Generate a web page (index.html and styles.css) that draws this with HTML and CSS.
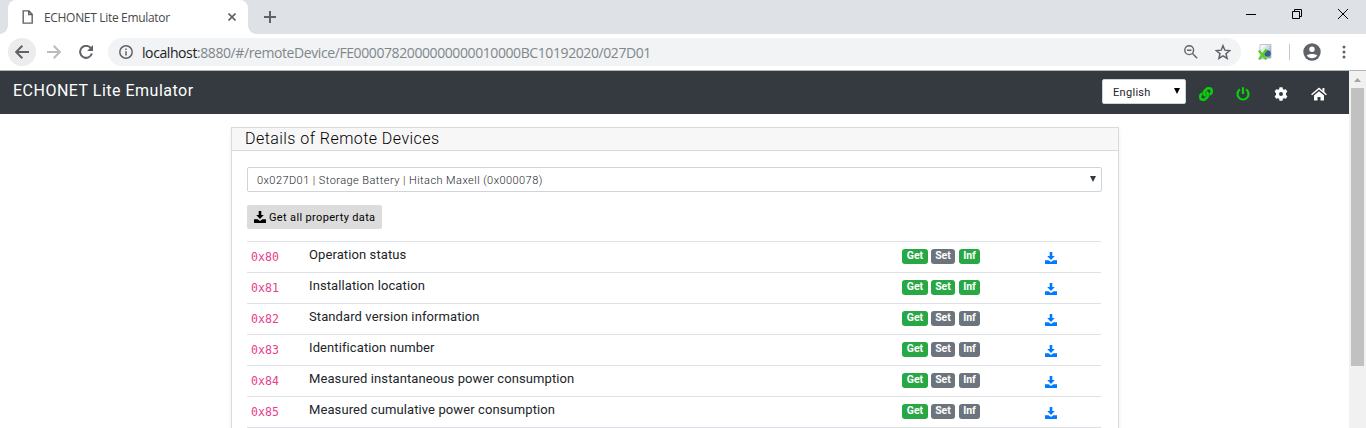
FILE: index.html
```html
<!DOCTYPE html>
<html lang="en">
<head>
<meta charset="utf-8">
<title>ECHONET Lite Emulator</title>
<link rel="stylesheet" href="styles.css">
</head>
<body>
<svg class="defs" aria-hidden="true">
  <symbol id="download" viewBox="0 0 12 12"><path d="M4.700 0h2.600v4h2.500L6 8 2.200 4h2.500zM0 8.200h3.600L6 10.100 8.400 8.200H12v3.300q0 .5-.5.5H.5Q0 12 0 11.500z"/></symbol>
</svg>
<header class="tabstrip">
  <div class="tab">
    <svg class="page-icon" viewBox="0 0 12 14"><path d="M1.2.9H7l3.2 3.3v8.900h-9zM6.700 1v3.500h3.500" /></svg>
    <span class="tab-title">ECHONET Lite Emulator</span>
    <svg class="tab-close" viewBox="0 0 8 8"><path d="M.5.5l7 7M7.500.5l-7 7"/></svg>
  </div>
  <svg class="new-tab" viewBox="0 0 12 12"><path d="M6 0v12M0 6h12"/></svg>
  <div class="window-buttons">
    <svg viewBox="0 0 10 10"><path d="M0 5.500h10"/></svg>
    <svg viewBox="0 0 10 10"><path d="M.5 2.500h7v7h-7zM2.500 2.500v-2h7v7h-2"/></svg>
    <svg viewBox="0 0 10 10"><path d="M0 0l10 10M10 0L0 10"/></svg>
  </div>
</header>
<div class="toolbar">
  <span class="back"><svg viewBox="0 0 14 14"><path d="M14 7H1.500M7.300.8L1.200 7l6.100 6.200"/></svg></span>
  <svg class="forward" viewBox="0 0 14 14"><path d="M0 7h12.500M6.700.8L12.800 7l-6.100 6.200"/></svg>
  <svg class="reload" viewBox="0 0 14 14"><path class="arc" d="M11.900 3.200A6 6 0 1 0 12.900 8.500"/><path class="head" d="M14 0v5.900H8.100z"/></svg>
  <div class="omnibox">
    <svg class="info" viewBox="0 0 14 14"><circle cx="7" cy="7" r="6.200"/><path d="M7 6.200v4.300M7 3.500v1.500"/></svg>
    <span class="url"><b>localhost</b>:8880/#/remoteDevice/FE0000782000000000010000BC10192020/027D01</span>
    <svg class="lens" viewBox="0 0 14 14"><circle cx="5.200" cy="5.200" r="4.400"/><path d="M8.500 8.500l4.700 4.700M3 5.200h4.400"/></svg>
    <svg class="star" viewBox="0 0 14 14"><path d="M7 1.500l1.600 3.900 4.200.4-3.200 2.700 1 4.100L7 10.400l-3.600 2.200 1-4.100-3.200-2.700 4.200-.4z"/></svg>
  </div>
  <svg class="extension" viewBox="0 0 14 16">
    <defs><linearGradient id="paper" x1="0" y1="0" x2="1" y2="1"><stop offset=".2" stop-color="#f4f6f8"/><stop offset="1" stop-color="#7e9db5"/></linearGradient></defs>
    <path d="M2 .5h11V14L2 15z" fill="url(#paper)" stroke="#a9b1b8" stroke-width=".7"/>
    <circle cx="9.500" cy="9.500" r="3.300" fill="#365f8c"/>
    <path d="M.8 6.500l7.500 9M8.500 5.500l-7.500 10" stroke="#55cf1a" stroke-width="2.200"/>
  </svg>
  <span class="divider"></span>
  <svg class="avatar" viewBox="0 0 18 18"><circle cx="9" cy="9" r="8.700" fill="#5f6368"/><circle cx="9" cy="6.300" r="2.700" fill="#fff"/><path d="M3.800 12.500c1-2.100 9.400-2.100 10.400 0-2.300 3.500-8.100 3.500-10.400 0z" fill="#fff"/></svg>
  <svg class="more" viewBox="0 0 4 14"><circle cx="2" cy="2" r="1.500"/><circle cx="2" cy="7" r="1.500"/><circle cx="2" cy="12" r="1.500"/></svg>
</div>
<div class="viewport">
  <div class="page">
    <nav class="navbar">
      <span class="brand">ECHONET Lite Emulator</span>
      <div class="language"><span>English</span><svg viewBox="0 0 6 6"><path d="M0 0h6L3 6z"/></svg></div>
      <svg class="nav-icon on link" viewBox="0 0 512 512"><path d="M326.612 185.391c59.747 59.809 58.927 155.698.36 214.590-.110.120-.240.250-.360.370l-67.200 67.200c-59.270 59.270-155.699 59.262-214.960 0-59.270-59.260-59.270-155.700 0-214.960l37.106-37.106c9.840-9.840 26.786-3.300 27.294 10.606.648 17.722 3.826 35.527 9.690 52.721 1.986 5.822.567 12.262-3.783 16.612l-13.087 13.087c-28.026 28.026-28.905 73.660-1.155 101.960 28.024 28.579 74.086 28.749 102.325.510l67.200-67.190c28.191-28.191 28.073-73.757 0-101.830-3.701-3.694-7.429-6.564-10.341-8.569a16.037 16.037 0 0 1-6.947-12.606c-.396-10.567 3.348-21.456 11.698-29.806l21.054-21.055c5.521-5.521 14.182-6.199 20.584-1.731a152.482 152.482 0 0 1 20.522 17.197zM467.547 44.449c-59.261-59.262-155.690-59.270-214.960 0l-67.200 67.200c-.120.120-.250.250-.360.370-58.566 58.892-59.387 154.781.360 214.590a152.454 152.454 0 0 0 20.521 17.196c6.402 4.468 15.064 3.789 20.584-1.731l21.054-21.055c8.350-8.350 12.094-19.239 11.698-29.806a16.037 16.037 0 0 0-6.947-12.606c-2.912-2.005-6.640-4.875-10.341-8.569-28.073-28.073-28.191-73.639 0-101.830l67.200-67.190c28.239-28.239 74.300-28.069 102.325.510 27.750 28.300 26.872 73.934-1.155 101.960l-13.087 13.087c-4.350 4.350-5.769 10.790-3.783 16.612 5.864 17.194 9.042 34.999 9.690 52.721.509 13.906 17.454 20.446 27.294 10.606l37.106-37.106c59.271-59.259 59.271-155.699.001-214.959z"/></svg>
      <svg class="nav-icon on power" viewBox="0 0 14 14"><path d="M4 2.400a5.500 5.500 0 1 0 6 0M7 .3v6.700"/></svg>
      <svg class="nav-icon" viewBox="0 0 14 14"><path fill-rule="evenodd" d="M5.500.3h3l.4 1.900 1.100.6 1.900-.6L13.400 4.700l-1.400 1.300v2L13.400 9.300l-1.500 2.500-1.900-.6-1.100.6-.4 1.900h-3l-.4-1.900-1.100-.6-1.900.6L.6 9.300 2 8V6L.6 4.700l1.500-2.500 1.900.6 1.100-.6zM7 5a2 2 0 1 0 0 4 2 2 0 0 0 0-4z"/></svg>
      <svg class="nav-icon home" viewBox="0 0 16 14"><path d="M8 4.300l5 4.200V13q0 .5-.5.500H9.500V10h-3v3.500h-3Q3 13.500 3 13V8.500z"/><path d="M.6 7.700L8 1.500l7.400 6.200" fill="none" stroke="#fff" stroke-width="1.500"/><path d="M11.500 1H13.400v4.500l-1.900-1.600z"/></svg>
    </nav>
    <main class="card">
      <h1 class="card-header"><span>Details of Remote Devices</span></h1>
      <div class="card-body">
        <div class="device-select"><span>0x027D01 | Storage Battery | Hitach Maxell (0x000078)</span><svg viewBox="0 0 6 6"><path d="M0 0h6L3 6z"/></svg></div>
        <button class="get-all"><svg><use href="#download"/></svg><span>Get all property data</span></button>
        <div class="properties">
          <div class="row"><code>0x80</code><span class="name">Operation status</span><span class="badges"><i class="get yes">Get</i><i class="set">Set</i><i class="inf yes">Inf</i></span><svg class="fetch"><use href="#download"/></svg></div>
          <div class="row"><code>0x81</code><span class="name">Installation location</span><span class="badges"><i class="get yes">Get</i><i class="set yes">Set</i><i class="inf yes">Inf</i></span><svg class="fetch"><use href="#download"/></svg></div>
          <div class="row"><code>0x82</code><span class="name">Standard version information</span><span class="badges"><i class="get yes">Get</i><i class="set">Set</i><i class="inf">Inf</i></span><svg class="fetch"><use href="#download"/></svg></div>
          <div class="row"><code>0x83</code><span class="name">Identification number</span><span class="badges"><i class="get yes">Get</i><i class="set">Set</i><i class="inf">Inf</i></span><svg class="fetch"><use href="#download"/></svg></div>
          <div class="row"><code>0x84</code><span class="name">Measured instantaneous power consumption</span><span class="badges"><i class="get yes">Get</i><i class="set">Set</i><i class="inf">Inf</i></span><svg class="fetch"><use href="#download"/></svg></div>
          <div class="row"><code>0x85</code><span class="name">Measured cumulative power consumption</span><span class="badges"><i class="get yes">Get</i><i class="set">Set</i><i class="inf">Inf</i></span><svg class="fetch"><use href="#download"/></svg></div>
          <div class="row"></div>
        </div>
      </div>
    </main>
  </div>
  <div class="scrollbar"><svg viewBox="0 0 7 4"><path d="M0 4h7L3.500 0z"/></svg><div class="thumb"></div></div>
</div>
</body>
</html>
```

FILE: styles.css
```css
* { box-sizing: border-box; }
body { margin: 0; height: 428px; overflow: hidden; display: flex; flex-direction: column; background: #fff; font-family: Roboto, sans-serif; color: #212529; }
svg { display: block; flex: none; }
.defs { width: 0; height: 0; position: absolute; }

/* Browser tab strip */
.tabstrip { flex: none; height: 34px; display: flex; align-items: center; background: #dee1e6; }
.tab { position: relative; align-self: stretch; width: 240px; margin-left: 8px; padding: 0 12px 0 14px; display: flex; align-items: center; background: #fff; border-radius: 8px 8px 0 0; }
.tab::before, .tab::after { content: ""; position: absolute; bottom: 0; width: 8px; height: 8px; }
.tab::before { left: -8px; background: radial-gradient(circle at 0 0, #dee1e6 7.5px, #fff 8px); }
.tab::after { right: -8px; background: radial-gradient(circle at 100% 0, #dee1e6 7.5px, #fff 8px); }
.page-icon { width: 12px; height: 14px; fill: none; stroke: #5f6368; stroke-width: 1.4; }
.tab-title { margin-left: 10px; flex: 1; font: 12px "Open Sans", sans-serif; letter-spacing: -.32px; color: #45494d; white-space: nowrap; }
.tab-close { width: 8px; height: 8px; stroke: #5f6368; stroke-width: 1.6; }
.new-tab { width: 12px; height: 12px; margin-left: 16px; stroke: #5f6368; stroke-width: 2; }
.window-buttons { margin-left: auto; margin-right: 18px; margin-top: -6px; display: flex; gap: 36px; }
.window-buttons svg { width: 10px; height: 10px; fill: none; stroke: #000; }

/* Browser toolbar */
.toolbar { flex: none; height: 37px; display: flex; align-items: center; border-bottom: 1px solid #b4b5b7; }
.back { width: 28px; height: 28px; margin-left: 8px; display: grid; place-items: center; border-radius: 50%; background: #ececed; }
.back svg, .forward, .reload { width: 14px; height: 14px; fill: none; stroke: #5f6368; stroke-width: 2; }
.forward { margin-left: 11px; stroke: #babcbe; }
.reload { margin-left: 18px; }
.reload .head { fill: #5f6368; stroke: none; }
.omnibox { height: 28px; width: 1133px; margin-left: 15px; padding: 0 10px 0 11px; display: flex; align-items: center; border-radius: 14px; background: #f1f3f4; }
.info { width: 14px; height: 14px; fill: none; stroke: #5f6368; stroke-width: 1.5; }
.url { margin-left: 9px; flex: 1; font: 14px "Open Sans", sans-serif; letter-spacing: -.41px; color: #80868b; white-space: nowrap; }
.url b { font-weight: 400; color: #202124; }
.lens { width: 14px; height: 14px; fill: none; stroke: #5f6368; stroke-width: 1.4; }
.star { width: 16px; height: 16px; margin-left: 17px; fill: none; stroke: #5f6368; stroke-width: 1.3; }
.extension { width: 14px; height: 16px; margin-left: 17px; }
.divider { width: 1px; height: 16px; margin-left: 17px; background: #c4c6c9; }
.avatar { width: 18px; height: 18px; margin-left: 13px; }
.more { width: 4px; height: 14px; margin-left: 21px; fill: #5f6368; }

/* Web page area */
.viewport { flex: 1; display: flex; min-height: 0; }
.page { flex: 1; overflow: hidden; }
.navbar { height: 43px; padding-right: 22px; display: flex; align-items: center; background: #343a40; }
.brand { margin: -4px auto 0 13px; font-size: 16px; letter-spacing: .5px; color: #fff; }
.language { width: 84px; height: 25px; margin-right: 13px; margin-top: -2px; padding: 0 5px 0 10px; display: flex; align-items: center; justify-content: space-between; border: 1px solid #ced4da; border-radius: 2px; background: #fff; font-size: 11px; letter-spacing: .3px; color: #212529; }
.language span { padding-top: 1px; }
.language svg, .device-select svg { width: 6px; height: 6px; margin-top: -1px; fill: #000; }
.nav-icon { width: 14px; height: 14px; margin-top: 3px; margin-right: 23px; fill: #fff; }
.nav-icon.on { fill: #0ad20a; }
.nav-icon.link { stroke: #0ad20a; stroke-width: 24; }
.nav-icon.power { margin-right: 24px; fill: none; stroke: #0ad20a; stroke-width: 2.2; }
.nav-icon.home { width: 16px; margin-right: 0; }
.card { width: 888px; height: 360px; margin: 13px 0 0 231px; border: 1px solid #d9dadb; box-shadow: 0 2px 4px rgba(0,0,0,.075); }
.card-header { margin: 0; height: 23px; padding: 0 0 1px 13px; display: flex; align-items: center; border-bottom: 1px solid #d9dadb; background: #f7f7f7; font-size: 16px; font-weight: 300; letter-spacing: .45px; color: #000; }
.card-body { padding: 16px 16px 0 15px; }
.device-select { height: 25px; padding: 0 5px 0 9px; display: flex; align-items: center; justify-content: space-between; border: 1px solid #ced4da; border-radius: 2px; font-size: 11px; font-weight: 300; letter-spacing: .44px; color: #212529; }
.device-select span { padding-top: 1px; }
.device-select svg { fill: #343a40; }
.get-all { height: 24px; width: 135px; margin: 13px 0 12px; padding: 0 0 0 7px; display: flex; align-items: center; border: 0; border-radius: 2px; background: #dcdcdc; font: 11px Roboto, sans-serif; letter-spacing: .35px; color: #000; white-space: nowrap; }
.get-all svg { width: 12px; height: 12px; margin: 0 3px 1px 0; }
.properties { width: 854px; }
.row { height: 31px; display: grid; grid-template-columns: 62px 593px 143px 1fr; align-items: start; border-top: 1px solid #dee2e6; }
.row code { padding: 8px 0 0 4px; font: 11.6px/14px "DejaVu Sans Mono", monospace; color: #e83e8c; }
.name { padding-top: 5px; font-size: 13px; line-height: 16px; letter-spacing: .1px; }
.badges { padding-top: 7px; display: flex; }
.badges i { height: 15px; margin-right: 3px; border-radius: 3px; background: #6c757d; color: #fff; font: bold 10.500px/13px Roboto, sans-serif; text-align: center; }
.badges .yes { background: #28a745; }
.badges .get { width: 26px; }
.badges .set { width: 24px; margin-right: 4px; }
.badges .inf { width: 21px; }
.fetch { width: 12px; height: 12px; margin-top: 10px; fill: #007bff; }

/* Scrollbar */
.scrollbar { width: 17px; padding-top: 7px; display: flex; flex-direction: column; align-items: center; background: #f1f1f1; }
.scrollbar svg { width: 7px; height: 4px; fill: #a3a3a3; }
.thumb { width: 13px; height: 278px; margin-top: 6px; background: #c1c1c1; }
```
